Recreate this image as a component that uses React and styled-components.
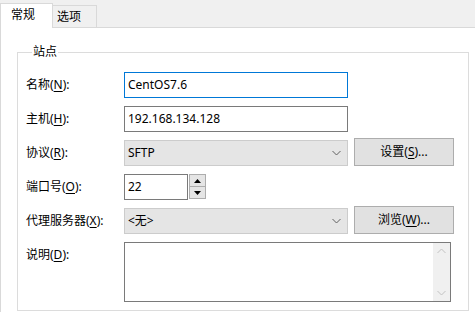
import React from "react";
import styled, { createGlobalStyle } from "styled-components";

const GlobalStyle = createGlobalStyle`
  html, body {
    margin: 0;
    padding: 0;
    background: #f0f0f0;
    overflow: hidden;
  }
  body {
    font-family: "Noto Sans", "Noto Sans CJK SC", sans-serif;
    font-size: 12px;
    color: #000;
  }
  * {
    box-sizing: border-box;
  }
`;

/// tabs ///
const Window = styled.div`
  width: 475px;
  height: 312px;
  display: flex;
  flex-direction: column;
`;

const TabStrip = styled.div`
  display: flex;
  align-items: flex-end;
  height: 27px;
  flex-shrink: 0;
`;

const Tab = styled.div`
  position: relative;
  z-index: 1;
  display: flex;
  align-items: center;
  height: ${(p) => (p.$active ? "25px" : "22px")};
  width: ${(p) => (p.$active ? "53px" : "44px")};
  padding-left: ${(p) => (p.$active ? "10px" : "4px")};
  padding-bottom: ${(p) => (p.$active ? "2px" : "0")};
  margin-bottom: ${(p) => (p.$active ? "-1px" : "0")};
  background: ${(p) => (p.$active ? "#ffffff" : "#f0f0f0")};
  border: 1px solid #d9d9d9;
  border-bottom: none;
  border-left: ${(p) => (p.$active ? "1px solid #d9d9d9" : "none")};
  line-height: 16px;
`;

const Panel = styled.div`
  flex: 1;
  background: #ffffff;
  border-top: 1px solid #d9d9d9;
  border-left: 1px solid #d9d9d9;
`;

/// group box ///
const GroupBox = styled.fieldset`
  width: 452px;
  margin: 16px 0 0 16px;
  padding: 12px 0 8px 8px;
  border: 1px solid #dcdcdc;
  min-width: 0;
`;

const Legend = styled.legend`
  margin-left: 6px;
  padding: 0 1px;
  line-height: 16px;
  height: 16px;
`;

const Form = styled.div`
  display: flex;
  flex-direction: column;
  gap: 8px;
`;

const Row = styled.div`
  display: flex;
  align-items: ${(p) => (p.$top ? "flex-start" : "center")};
  height: ${(p) => p.$height || 26}px;
`;

const Label = styled.label`
  width: 98px;
  flex-shrink: 0;
  line-height: 26px;
  height: 26px;
  white-space: nowrap;

  u {
    text-decoration: underline;
    text-underline-offset: 2px;
  }
`;

const TextBox = styled.div`
  width: ${(p) => p.$width}px;
  height: 26px;
  border: 1px solid ${(p) => (p.$focused ? "#0078d7" : "#7a7a7a")};
  background: #ffffff;
  padding-left: 3px;
  line-height: 24px;
  white-space: nowrap;
`;

const Select = styled.div`
  width: 224px;
  height: 26px;
  border: 1px solid #cccccc;
  background: #e5e5e5;
  display: flex;
  align-items: center;
  justify-content: space-between;
  padding: 0 6px 0 3px;
  line-height: 24px;
`;

const Button = styled.div`
  align-self: flex-end;
  width: 100px;
  height: 28px;
  margin-left: 6px;
  border: 1px solid #adadad;
  background: #e1e1e1;
  display: flex;
  align-items: center;
  justify-content: center;
  line-height: 26px;

  u {
    text-decoration: underline;
    text-underline-offset: 2px;
  }
`;

const Spinner = styled.div`
  width: 17px;
  height: 25px;
  margin-left: 1px;
  align-self: flex-start;
  border: 1px solid #adadad;
  background: #e5e5e5;
  display: flex;
  flex-direction: column;
`;

const SpinHalf = styled.div`
  flex: 1;
  display: flex;
  align-items: center;
  justify-content: center;
  border-top: ${(p) => (p.$lower ? "1px solid #adadad" : "none")};
`;

const TextArea = styled.div`
  width: 327px;
  height: 60px;
  border: 1px solid #7a7a7a;
  background: #ffffff;
  display: flex;
  justify-content: flex-end;
`;

const ScrollBar = styled.div`
  width: 17px;
  height: 100%;
  background: #f0f0f0;
  display: flex;
  flex-direction: column;
  justify-content: space-between;
  align-items: center;
  padding: 5px 0;
`;

const Chevron = ({ dir = "down", color = "#606060" }) => (
  <svg width="9" height="6" viewBox="0 0 9 6">
    <polyline
      points={dir === "down" ? "0.5,1 4.5,5 8.5,1" : "0.5,5 4.5,1 8.5,5"}
      fill="none"
      stroke={color}
      strokeWidth="1"
    />
  </svg>
);

const Triangle = ({ up }) => (
  <svg width="7" height="4" viewBox="0 0 7 4">
    <polygon points={up ? "0,4 7,4 3.5,0" : "0,0 7,0 3.5,4"} fill="#000" />
  </svg>
);

function App() {
  return (
    <Window>
      <GlobalStyle />
      <TabStrip>
        <Tab $active>常规</Tab>
        <Tab>选项</Tab>
      </TabStrip>
      <Panel>
        <GroupBox>
          <Legend>站点</Legend>
          <Form>
            <Row>
              <Label>
                名称(<u>N</u>):
              </Label>
              <TextBox $width={224} $focused>
                CentOS7.6
              </TextBox>
            </Row>
            <Row>
              <Label>
                主机(<u>H</u>):
              </Label>
              <TextBox $width={224}>192.168.134.128</TextBox>
            </Row>
            <Row>
              <Label>
                协议(<u>R</u>):
              </Label>
              <Select>
                <span>SFTP</span>
                <Chevron />
              </Select>
              <Button>
                设置(<u>S</u>)...
              </Button>
            </Row>
            <Row>
              <Label>
                端口号(<u>O</u>):
              </Label>
              <TextBox $width={64}>22</TextBox>
              <Spinner>
                <SpinHalf>
                  <Triangle up />
                </SpinHalf>
                <SpinHalf $lower>
                  <Triangle />
                </SpinHalf>
              </Spinner>
            </Row>
            <Row>
              <Label>
                代理服务器(<u>X</u>):
              </Label>
              <Select>
                <span>&lt;无&gt;</span>
                <Chevron />
              </Select>
              <Button>
                浏览(<u>W</u>)...
              </Button>
            </Row>
            <Row $top $height={60}>
              <Label>
                说明(<u>D</u>):
              </Label>
              <TextArea>
                <ScrollBar>
                  <Chevron dir="up" color="#c2c2c2" />
                  <Chevron color="#c2c2c2" />
                </ScrollBar>
              </TextArea>
            </Row>
          </Form>
        </GroupBox>
      </Panel>
    </Window>
  );
}

export default App;
